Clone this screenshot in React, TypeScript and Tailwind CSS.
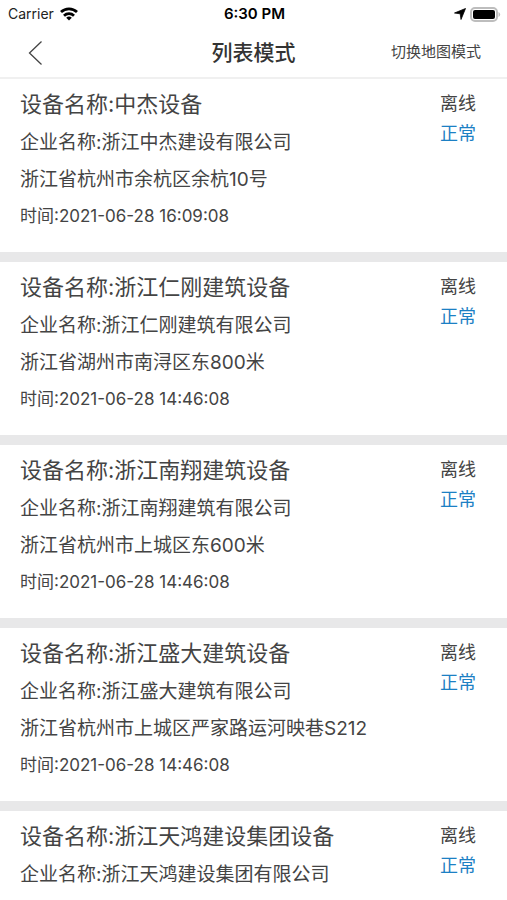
type Device = {
    name: string;
    company: string;
    address?: string;
    time?: string;
};

const devices: Device[] = [
    {
        name: "中杰设备",
        company: "浙江中杰建设有限公司",
        address: "浙江省杭州市余杭区余杭10号",
        time: "2021-06-28 16:09:08",
    },
    {
        name: "浙江仁刚建筑设备",
        company: "浙江仁刚建筑有限公司",
        address: "浙江省湖州市南浔区东800米",
        time: "2021-06-28 14:46:08",
    },
    {
        name: "浙江南翔建筑设备",
        company: "浙江南翔建筑有限公司",
        address: "浙江省杭州市上城区东600米",
        time: "2021-06-28 14:46:08",
    },
    {
        name: "浙江盛大建筑设备",
        company: "浙江盛大建筑有限公司",
        address: "浙江省杭州市上城区严家路运河映巷S212",
        time: "2021-06-28 14:46:08",
    },
    {
        name: "浙江天鸿建设集团设备",
        company: "浙江天鸿建设集团有限公司",
    },
];

function StatusBar() {
    return (
        <div className="grid grid-cols-3 items-center h-7 pl-2 pr-1.5 text-sm text-black">
            <div className="flex items-center gap-1.5 text-[#222]">
                <span>Carrier</span>
                <svg viewBox="0 0 18 14" className="w-[18px] h-3.5" fill="none" stroke="#000" strokeWidth="2.8">
                    <path d="M1 5.1a11.6 11.6 0 0 1 16 0" />
                    <path d="M4 8.7a7.3 7.3 0 0 1 10 0" />
                    <path d="M9 13.6 6.2 10.8a4 4 0 0 1 5.6 0Z" fill="#000" stroke="none" />
                </svg>
            </div>
            <span className="text-center text-[15px] font-semibold">6:30 PM</span>
            <div className="flex items-center justify-end gap-1">
                <svg viewBox="0 0 12 12" className="w-3 h-3" fill="#000" stroke="#000" strokeWidth="0.8" strokeLinejoin="round">
                    <path d="M11.5.5 7 11.5 6.2 5.8.5 5Z" />
                </svg>
                <svg viewBox="0 0 31 15" className="w-[31px] h-[15px]">
                    <rect x="1" y="1" width="26" height="13" rx="4" fill="#fff" stroke="#bdbdbd" strokeWidth="2" />
                    <rect x="3" y="3" width="22" height="9" rx="2" fill="#000" />
                    <path d="M28.5 5v5a2.7 2.7 0 0 0 0-5Z" fill="#bdbdbd" />
                </svg>
            </div>
        </div>
    );
}

function DeviceCard({ device }: { device: Device }) {
    return (
        <li className="flex justify-between bg-white pl-5 pr-[31px] pt-2 pb-[18px]">
            <div className="text-[19px] leading-9">
                <h2 className="mb-1 text-[22px] leading-[34px]">设备名称:{device.name}</h2>
                <p>企业名称:{device.company}</p>
                {device.address && <p className="pt-px">{device.address}</p>}
                {device.time && <p className="text-[17px]">时间:{device.time}</p>}
            </div>
            <div className="text-lg leading-[30px] pt-0.5">
                <p>离线</p>
                <p className="text-[#1c80c4]">正常</p>
            </div>
        </li>
    );
}

export default function App() {
    return (
        <div className="h-screen overflow-hidden bg-white font-[Inter,'Noto_Sans_CJK_SC',sans-serif] text-[#444]">
            <StatusBar />
            <header className="grid grid-cols-3 items-center h-[51px] px-[26px] border-b-2 border-[#f0f0f0]">
                <button type="button" aria-label="返回" className="justify-self-start">
                    <svg viewBox="0 0 18 26" className="w-[18px] h-[26px]" fill="none" stroke="#444" strokeWidth="1.3">
                        <path d="M15.5 1.5 3.5 13l12 11.5" />
                    </svg>
                </button>
                <h1 className="text-center text-[21px] font-medium text-[#333]">列表模式</h1>
                <button type="button" className="justify-self-end text-[15px]">切换地图模式</button>
            </header>
            <ul className="flex flex-col gap-2.5 bg-[#e8e8e9]">
                {devices.map((device) => (
                    <DeviceCard key={device.name} device={device} />
                ))}
            </ul>
        </div>
    );
}
